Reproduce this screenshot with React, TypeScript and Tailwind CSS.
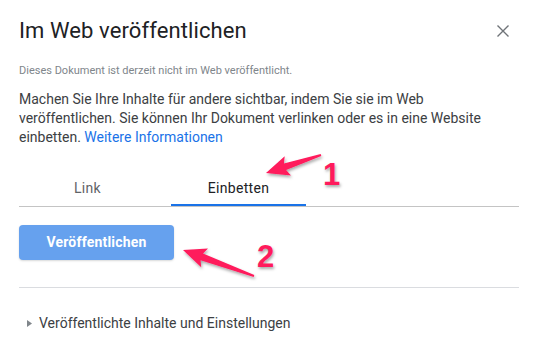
import React from 'react';

type Pt = [number, number];

// tapered annotation arrow, tip is where it points
function arrowPoints(tail: Pt, tip: Pt) {
    const dx = tip[0] - tail[0];
    const dy = tip[1] - tail[1];
    const len = Math.hypot(dx, dy);
    const ux = dx / len;
    const uy = dy / len;
    const nx = -uy;
    const ny = ux;
    const headLen = 20;
    const headHalf = 10;
    const baseX = tip[0] - ux * headLen;
    const baseY = tip[1] - uy * headLen;
    const p = (x: number, y: number) => `${x.toFixed(1)},${y.toFixed(1)}`;
    return [
        p(tail[0] + nx * 1, tail[1] + ny * 1),
        p(baseX + nx * 3.5, baseY + ny * 3.5),
        p(baseX + nx * headHalf - ux * 3, baseY + ny * headHalf - uy * 3),
        p(tip[0], tip[1]),
        p(baseX - nx * headHalf - ux * 3, baseY - ny * headHalf - uy * 3),
        p(baseX - nx * 3.5, baseY - ny * 3.5),
        p(tail[0] - nx * 1, tail[1] - ny * 1),
    ].join(' ');
}

function Marker({ n, className }: { n: string; className: string }) {
    return (
        <span
            className={`absolute text-[31px] leading-none font-bold text-[#ff1a5c] [-webkit-text-stroke:3px_white] [paint-order:stroke_fill] [text-shadow:1px_2px_3px_rgba(0,0,0,0.35)] ${className}`}
            style={{ fontFamily: '"Liberation Sans", Arial, sans-serif' }}
        >
            {n}
        </span>
    );
}

export default function App() {
    return (
        <div
            className="relative w-[538px] h-[347px] bg-white overflow-hidden"
            style={{ fontFamily: 'Roboto, "Noto Sans", sans-serif' }}
        >
            <div className="pl-[19px] pr-[19px] pt-[17px]">
                {/* header */}
                <div className="flex items-center justify-between">
                    <h1 className="text-[22px] leading-[28px] text-[#202124] tracking-[0.1px]">
                        Im Web veröffentlichen
                    </h1>
                    <button className="w-[18px] h-[18px] flex items-center justify-center mr-[7px] mt-[-1px]">
                        <svg width="12" height="12" viewBox="0 0 12 12">
                            <path d="M0.5 0.5L11.5 11.5M11.5 0.5L0.5 11.5" stroke="#6f7378" strokeWidth="1.4" />
                        </svg>
                    </button>
                </div>

                <p className="mt-[19px] text-[11px] leading-[14px] text-[#80868b]">
                    Dieses Dokument ist derzeit nicht im Web veröffentlicht.
                </p>

                <p className="mt-[12px] text-[14px] leading-[19px] text-[#3c4043]">
                    Machen Sie Ihre Inhalte für andere sichtbar, indem Sie sie im Web
                    <br />
                    veröffentlichen. Sie können Ihr Dokument verlinken oder es in eine Website
                    <br />
                    einbetten. <span className="text-[#1a73e8]">Weitere Informationen</span>
                </p>

                {/* tabs */}
                <div className="mt-[31px] flex border-b border-[#c4c4c4]">
                    <div className="w-[137px] h-[28px] flex items-start justify-center text-[14px] text-[#5f6368] tracking-[0.3px]">
                        Link
                    </div>
                    <div className="ml-[15px] w-[135px] h-[28px] flex items-start justify-center text-[14px] text-[#202124] tracking-[0.3px] border-b-[2px] border-[#1a73e8] -mb-px">
                        Einbetten
                    </div>
                </div>

                <button className="mt-[18px] w-[155px] h-[35px] rounded-[4px] bg-[#66a1ee] text-white text-[14px] font-bold tracking-[0.2px] shadow-[0_1px_2px_rgba(60,64,67,0.2)]">
                    Veröffentlichen
                </button>

                <div className="mt-[27px] border-t border-[#dadce0]" />

                <div className="mt-[25px] flex items-center text-[14px] text-[#3c4043]">
                    <svg width="5" height="7" viewBox="0 0 5 7" className="ml-[8px] mr-[7px]">
                        <path d="M0 0L5 3.5L0 7Z" fill="#80868b" />
                    </svg>
                    Veröffentlichte Inhalte und Einstellungen
                </div>
            </div>

            {/* annotations */}
            <svg
                className="absolute inset-0 pointer-events-none"
                width="538"
                height="347"
                viewBox="0 0 538 347"
            >
                <defs>
                    <filter id="sh" x="-20%" y="-50%" width="140%" height="200%">
                        <feDropShadow dx="1" dy="2" stdDeviation="1.5" floodColor="#000" floodOpacity="0.35" />
                    </filter>
                </defs>
                <polygon points={arrowPoints([321, 155], [266, 173])} fill="#ff1a5c" filter="url(#sh)" />
                <polygon points={arrowPoints([254, 276], [183, 250])} fill="#ff1a5c" filter="url(#sh)" />
            </svg>
            <Marker n="1" className="left-[323px] top-[159px]" />
            <Marker n="2" className="left-[257px] top-[241px]" />
        </div>
    );
}
